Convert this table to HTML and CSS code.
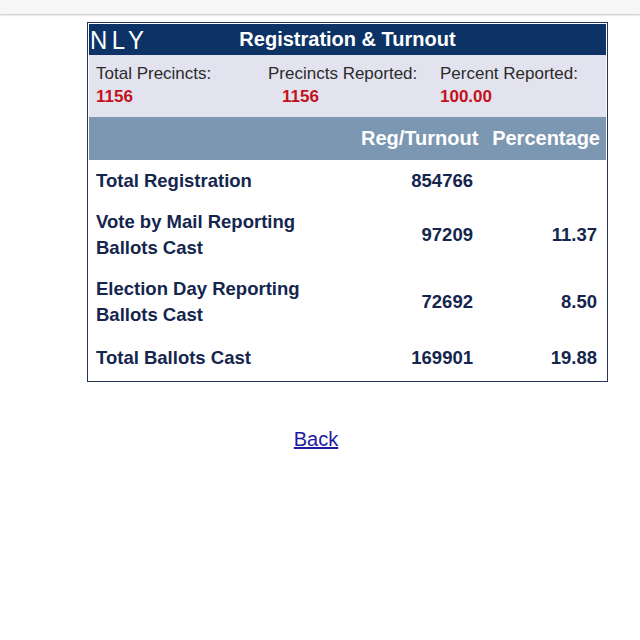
FILE: index.html
```html
<!DOCTYPE html>
<html>
<head>
<meta charset="utf-8">
<link rel="stylesheet" href="styles.css">
</head>
<body>
<div class="topbar"></div>
<div class="page">
  <table class="results">
    <colgroup>
      <col class="col-label">
      <col class="col-count">
      <col class="col-pct">
    </colgroup>
    <tr class="title-row">
      <td colspan="3" class="title-cell">
        <span class="county">NLY</span>
        <span class="title">Registration &amp; Turnout</span>
      </td>
    </tr>
    <tr class="info-row">
      <td colspan="3" class="info-cell">
        <div class="info">
          <div class="info-col">
            <div class="info-label">Total Precincts:</div>
            <div class="info-value">1156</div>
          </div>
          <div class="info-col">
            <div class="info-label">Precincts Reported:</div>
            <div class="info-value indent">1156</div>
          </div>
          <div class="info-col">
            <div class="info-label">Percent Reported:</div>
            <div class="info-value">100.00</div>
          </div>
        </div>
      </td>
    </tr>
    <tr class="head-row">
      <th class="c1"></th>
      <th class="c2">Reg/Turnout</th>
      <th class="c3">Percentage</th>
    </tr>
    <tr class="data r-single">
      <td class="c1">Total Registration</td>
      <td class="c2">854766</td>
      <td class="c3"></td>
    </tr>
    <tr class="data r-double">
      <td class="c1">Vote by Mail Reporting<br>Ballots Cast</td>
      <td class="c2">97209</td>
      <td class="c3">11.37</td>
    </tr>
    <tr class="data r-double second">
      <td class="c1">Election Day Reporting<br>Ballots Cast</td>
      <td class="c2">72692</td>
      <td class="c3">8.50</td>
    </tr>
    <tr class="data r-single last">
      <td class="c1">Total Ballots Cast</td>
      <td class="c2">169901</td>
      <td class="c3">19.88</td>
    </tr>
  </table>
  <div class="back-wrap"><a class="back" href="#">Back</a></div>
</div>
</body>
</html>
```
FILE: styles.css
```css
html, body {
  margin: 0;
  padding: 0;
  background: #ffffff;
  font-family: "Liberation Sans", Arial, sans-serif;
}
.topbar {
  height: 14px;
  background: #f6f6f6;
  box-shadow: 0 1px 2px rgba(0,0,0,0.25);
}
.page {
  padding-top: 8px;
}
.results {
  margin-left: 87px;
  width: 521px;
  border: 1px solid #27345a;
  border-collapse: separate;
  border-spacing: 0;
  padding: 1px;
  table-layout: fixed;
}
.col-label { width: 272px; }
.col-count { width: 116px; }
.results td, .results th {
  padding: 0;
}
.title-cell {
  background: #0d3366;
  height: 31px;
  position: relative;
  text-align: center;
  color: #ffffff;
}
.county {
  position: absolute;
  left: 1px;
  top: 1px;
  font-size: 26px;
  font-weight: normal;
  letter-spacing: 5px;
  transform: scaleX(0.92);
  transform-origin: left center;
  color: #ffffff;
}
.title {
  font-size: 20px;
  font-weight: bold;
}
.info-cell {
  background: #e3e3ef;
  height: 62px;
  vertical-align: top;
}
.info {
  display: grid;
  grid-template-columns: 172px 172px 1fr;
  padding: 8px 0 0 7px;
}
.info-label {
  font-size: 17px;
  color: #2b2b2b;
  line-height: 21px;
}
.info-value {
  font-size: 17px;
  font-weight: bold;
  color: #c3121c;
  line-height: 25px;
}
.info-value.indent {
  padding-left: 14px;
}
.head-row th {
  background: #7c97b2;
  height: 43px;
  color: #ffffff;
  font-size: 20px;
  font-weight: bold;
  vertical-align: middle;
}
.c1 {
  text-align: left;
  padding-left: 7px !important;
}
.c2 {
  text-align: right;
  padding-right: 4px !important;
}
.c3 {
  text-align: right;
  padding-right: 9px !important;
}
.head-row .c3 {
  padding-right: 6px !important;
}
.data td {
  color: #14264d;
  font-size: 18.5px;
  font-weight: bold;
  line-height: 26px;
  vertical-align: middle;
}
.r-single td {
  height: 41px;
}
.r-double td {
  height: 67px;
}
.r-double.second td {
  height: 68px;
}
.last td {
  height: 44px;
}
.back-wrap {
  text-align: center;
  margin-top: 46px;
  padding-right: 8px;
}
.back {
  font-size: 20px;
  color: #1f1aa0;
  text-decoration: underline;
}
```
